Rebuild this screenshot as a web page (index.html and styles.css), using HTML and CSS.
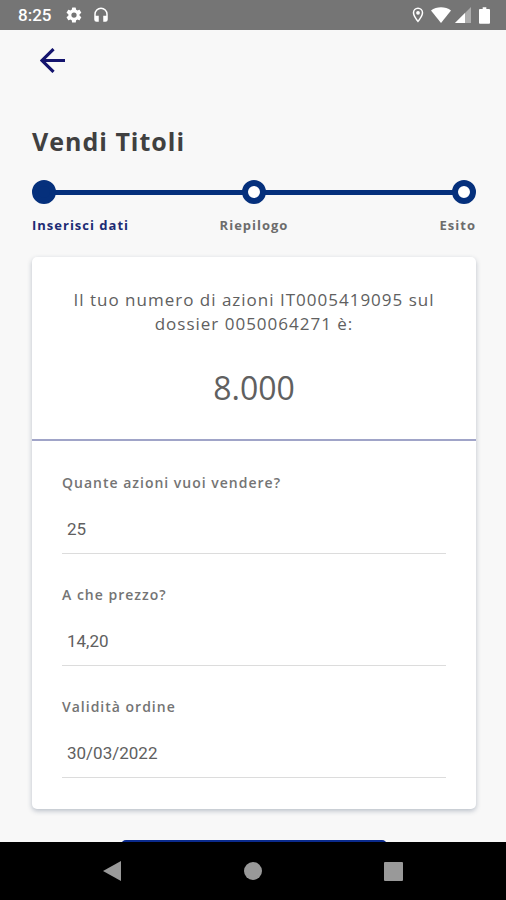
FILE: index.html
```html
<!DOCTYPE html>
<html lang="it">
<head>
    <meta charset="UTF-8">
    <meta name="viewport" content="width=device-width, initial-scale=1">
    <title>Vendi Titoli</title>
    <link rel="stylesheet" href="styles.css">
</head>
<body>
    <div class="status-bar">
        <span class="clock">8:25</span>
        <svg class="status-icon" viewBox="0 0 24 24"><path fill-rule="evenodd" d="M19.4 13a7.5 7.5 0 0 0 0-2l2.1-1.6a.5.5 0 0 0 .1-.7l-2-3.4a.5.5 0 0 0-.6-.2l-2.5 1a7.3 7.3 0 0 0-1.7-1l-.4-2.6a.5.5 0 0 0-.5-.5h-4a.5.5 0 0 0-.5.5L9 5.1a7.7 7.7 0 0 0-1.7 1l-2.5-1a.5.5 0 0 0-.6.2l-2 3.4a.5.5 0 0 0 .1.7L4.500 11a8 8 0 0 0 0 2l-2.2 1.6a.5.5 0 0 0-.1.7l2 3.4c.1.2.4.3.6.2l2.5-1c.5.4 1.1.7 1.7 1l.4 2.6c0 .3.2.5.5.5h4c.3 0 .5-.2.5-.5l.4-2.6a7.3 7.3 0 0 0 1.7-1l2.5 1c.2.1.5 0 .6-.2l2-3.4a.5.5 0 0 0-.1-.7zM12 15.500a3.5 3.5 0 1 1 0-7 3.5 3.5 0 0 1 0 7z"/></svg>
        <svg class="status-icon" viewBox="0 0 24 24"><path d="M12 2a9 9 0 0 0-9 9v7a3 3 0 0 0 3 3h3v-8H5v-2a7 7 0 0 1 14 0v2h-4v8h3a3 3 0 0 0 3-3v-7a9 9 0 0 0-9-9z"/></svg>
        <div class="status-right">
            <svg class="status-icon" viewBox="0 0 24 24"><path fill-rule="evenodd" d="M12 2a7 7 0 0 0-7 7c0 5.200 7 13 7 13s7-7.800 7-13a7 7 0 0 0-7-7zM7 9a5 5 0 0 1 10 0c0 2.900-2.900 7.200-5 9.900C9.900 16.200 7 11.900 7 9z"/><circle cx="12" cy="9" r="2.500"/></svg>
            <svg class="wifi-icon" viewBox="0 0 20 16"><path d="M0 3.500C5.500-.8 14.500-.8 20 3.500L10 16z"/></svg>
            <svg class="signal-icon" viewBox="0 0 16 16"><path opacity=".4" d="M16 0v16H0z"/><path d="M10 6v10H0z"/></svg>
            <svg class="battery-icon" viewBox="0 0 12 18"><path d="M4 0h4v2h3a1 1 0 0 1 1 1v14a1 1 0 0 1-1 1H1a1 1 0 0 1-1-1V3a1 1 0 0 1 1-1h3z"/></svg>
        </div>
    </div>

    <main class="page">
        <button class="back" type="button" aria-label="Indietro">
            <svg viewBox="0 0 24 24"><path d="M24 12H2M13 1L2 12l11 11"/></svg>
        </button>

        <h1 class="title">Vendi Titoli</h1>

        <ol class="steps">
            <li class="step active"><span class="dot"></span><span class="step-name">Inserisci dati</span></li>
            <li class="step"><span class="dot"></span><span class="step-name">Riepilogo</span></li>
            <li class="step"><span class="dot"></span><span class="step-name">Esito</span></li>
        </ol>

        <form class="card" id="order">
            <div class="summary">
                <p class="summary-text">Il tuo numero di azioni IT0005419095 sul dossier 0050064271 è:</p>
                <p class="summary-amount">8.000</p>
            </div>
            <div class="fields">
                <div class="field">
                    <label for="quantity">Quante azioni vuoi vendere?</label>
                    <input id="quantity" type="text" inputmode="numeric" value="25">
                </div>
                <div class="field">
                    <label for="price">A che prezzo?</label>
                    <input id="price" type="text" inputmode="decimal" value="14,20">
                </div>
                <div class="field">
                    <label for="validity">Validità ordine</label>
                    <input id="validity" type="text" value="30/03/2022">
                </div>
            </div>
        </form>

        <button class="submit" type="submit" form="order" aria-label="Avanti"></button>
    </main>

    <nav class="nav-bar">
        <button type="button" aria-label="Indietro"><svg viewBox="0 0 20 20"><path d="M18 0v20L0 10z"/></svg></button>
        <button type="button" aria-label="Home"><svg viewBox="0 0 20 20"><circle cx="10" cy="10" r="9"/></svg></button>
        <button type="button" aria-label="Recenti"><svg viewBox="0 0 20 20"><rect width="19" height="19" x="1" y="1" rx="1"/></svg></button>
    </nav>
</body>
</html>
```
FILE: styles.css
```css
* {
    box-sizing: border-box;
}

body {
    display: flex;
    flex-direction: column;
    height: 100vh;
    margin: 0;
    background-color: #f8f8f8;
    color: #606060;
    font-family: "Open Sans", "Noto Sans", sans-serif;
}

button {
    padding: 0;
    border: none;
    background: none;
    cursor: pointer;
}

svg {
    display: block;
}

/* status bar */
.status-bar {
    display: flex;
    flex-shrink: 0;
    align-items: center;
    gap: 9px;
    height: 30px;
    padding: 0 16px 0 18px;
    background-color: #757575;
    color: #fff;
    fill: #fff;
}

.clock {
    margin-right: 5px;
    font-family: Roboto, sans-serif;
    font-size: 17px;
    font-weight: 500;
}

.status-icon {
    width: 18px;
    height: 18px;
}

.status-right {
    display: flex;
    align-items: center;
    gap: 4px;
    margin-left: auto;
}

.wifi-icon {
    width: 20px;
    height: 16px;
}

.signal-icon {
    width: 16px;
    height: 16px;
    margin-right: 4px;
}

.battery-icon {
    width: 11px;
    height: 17px;
}

/* page */
.page {
    flex: 1;
    min-height: 0;
    padding: 18px 30px 0 32px;
    overflow: hidden;
}

.back {
    display: block;
    margin-left: 8px;
}

.back svg {
    width: 25px;
    height: 25px;
    fill: none;
    stroke: #14146e;
    stroke-width: 3;
}

.title {
    margin: 50px 0 21px;
    color: #404040;
    font-size: 25px;
    font-weight: 700;
    line-height: 36px;
    letter-spacing: 1px;
}

/* steps */
.steps {
    display: flex;
    justify-content: space-between;
    margin: 0;
    padding: 0;
    background: linear-gradient(#05307c, #05307c) center 10px / 96% 5px no-repeat;
    list-style: none;
}

.step {
    display: flex;
    flex: 1;
    flex-direction: column;
    align-items: center;
    gap: 10px;
}

.step:first-child {
    align-items: flex-start;
}

.step:last-child {
    align-items: flex-end;
}

.dot {
    width: 24px;
    height: 24px;
    border: 6px solid #05307c;
    border-radius: 50%;
    background-color: #fff;
}

.active .dot {
    background-color: #05307c;
}

.step-name {
    color: #6c6c6c;
    font-size: 13px;
    font-weight: 700;
    line-height: 22px;
    letter-spacing: 1px;
}

.active .step-name {
    color: #1c2b74;
}

/* card */
.card {
    margin-top: 21px;
    border-radius: 5px;
    background-color: #fff;
    box-shadow: 0 2px 5px rgba(40, 60, 90, 0.3);
}

.summary {
    padding: 31px 32px 30px;
    border-bottom: 2px solid #a0a4c8;
    text-align: center;
}

.summary-text {
    margin: 0;
    font-size: 17px;
    line-height: 24px;
    letter-spacing: 1px;
}

.summary-amount {
    margin: 31px 0 0;
    font-size: 32px;
    line-height: 42px;
}

.fields {
    display: flex;
    flex-direction: column;
    gap: 30px;
    padding: 31px 30px;
}

.field label {
    display: block;
    color: #747474;
    font-size: 14px;
    font-weight: 600;
    line-height: 22px;
    letter-spacing: 1px;
}

.field input {
    width: 100%;
    height: 60px;
    padding: 10px 5px 0;
    border: none;
    border-bottom: 1px solid #dcdcdc;
    outline: none;
    background: none;
    color: #606060;
    font-family: Roboto, sans-serif;
    font-size: 17px;
}

.submit {
    display: block;
    width: 60%;
    height: 48px;
    margin: 31px auto 0;
    border-radius: 5px;
    background-color: #0a2a8c;
}

/* bottom navigation */
.nav-bar {
    display: flex;
    flex-shrink: 0;
    justify-content: center;
    gap: 120px;
    height: 58px;
    background-color: #000;
}

.nav-bar svg {
    width: 20px;
    height: 20px;
    fill: #999;
}
```
